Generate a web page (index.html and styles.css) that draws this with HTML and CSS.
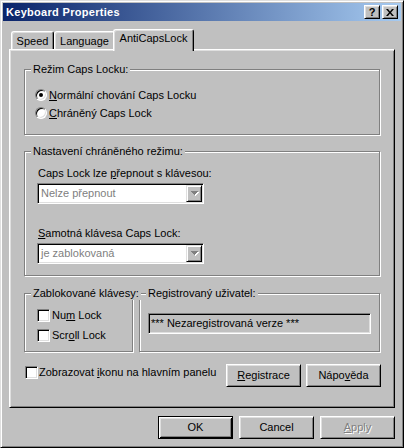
FILE: index.html
```html
<!DOCTYPE html>
<html>
<head>
<meta charset="utf-8">
<title>Keyboard Properties</title>
<link rel="stylesheet" href="styles.css">
</head>
<body>
<div class="window">
  <div class="titlebar">
    <span class="title">Keyboard Properties</span>
    <div class="tbtns">
      <span class="tbtn">?</span>
      <span class="tbtn"><svg width="8" height="7" viewBox="0 0 8 7"><path d="M0 0h2l2 2.4 2-2.4h2l-3 3.5 3 3.5h-2l-2-2.4-2 2.4h-2l3-3.5z" fill="#000"/></svg></span>
    </div>
  </div>
  <div class="body">
    <div class="tabs">
      <div class="tab t-speed">Speed</div>
      <div class="tab t-lang">Language</div>
      <div class="tab sel">AntiCapsLock</div>
    </div>
    <div class="panel">
      <div class="group g1">
        <div class="legend">Režim Caps Locku:</div>
        <div class="opt first"><span class="radio on"></span><span><u>N</u>ormální chování Caps Locku</span></div>
        <div class="opt"><span class="radio"></span><span><u>C</u>hráněný Caps Lock</span></div>
      </div>
      <div class="group g2">
        <div class="legend">Nastavení chráněného režimu:</div>
        <div class="flabel l1">Caps Lock lze <u>p</u>řepnout s klávesou:</div>
        <div class="combo">
          <span class="cval">Nelze přepnout</span>
          <span class="cbtn"><svg width="8" height="5" viewBox="0 0 8 5"><path d="M1 1H8V2H7V3H6V4H5V5H4V4H3V3H2V2H1Z" fill="#fff"/><path d="M0 0H7V1H6V2H5V3H4V4H3V3H2V2H1V1H0Z" fill="#808080"/></svg></span>
        </div>
        <div class="flabel l2"><u>S</u>amotná klávesa Caps Lock:</div>
        <div class="combo">
          <span class="cval">je zablokovaná</span>
          <span class="cbtn"><svg width="8" height="5" viewBox="0 0 8 5"><path d="M1 1H8V2H7V3H6V4H5V5H4V4H3V3H2V2H1Z" fill="#fff"/><path d="M0 0H7V1H6V2H5V3H4V4H3V3H2V2H1V1H0Z" fill="#808080"/></svg></span>
        </div>
      </div>
      <div class="grow">
        <div class="group g3">
          <div class="legend">Zablokované klávesy:</div>
          <div class="opt first"><span class="check"></span><span>Nu<u>m</u> Lock</span></div>
          <div class="opt"><span class="check"></span><span>Scr<u>o</u>ll Lock</span></div>
        </div>
        <div class="group g4">
          <div class="legend">Registrovaný uživatel:</div>
          <div class="edit">*** Nezaregistrovaná verze ***</div>
        </div>
      </div>
      <div class="brow">
        <div class="opt bchk"><span class="check"></span><span>Zobrazovat <u>i</u>konu na hlavním panelu</span></div>
        <div class="btn reg"><span><u>R</u>egistrace</span></div>
        <div class="btn nap"><span>Nápo<u>v</u>ěda</span></div>
      </div>
    </div>
    <div class="dlgbtns">
      <div class="btn def"><span>OK</span></div>
      <div class="btn"><span>Cancel</span></div>
      <div class="btn dis"><span><u>A</u>pply</span></div>
    </div>
  </div>
</div>
</body>
</html>
```

FILE: styles.css
```css
* { box-sizing: border-box; }
html, body { margin: 0; padding: 0; background: #c0c0c0; }
body {
  font-family: "Liberation Sans", Arial, sans-serif;
  font-size: 11px;
  line-height: 13px;
  color: #000;
}
u { text-decoration: underline; text-underline-offset: 1px; }

.window {
  width: 404px;
  height: 448px;
  border: 1px solid;
  border-color: #dfdfdf #000 #000 #dfdfdf;
  box-shadow: inset 1px 1px #fff, inset -1px -1px #808080;
  padding: 2px;
  display: flex;
  flex-direction: column;
  background: #c0c0c0;
}

.titlebar {
  height: 18px;
  flex: none;
  display: flex;
  align-items: center;
  justify-content: space-between;
  padding: 0 3px 0 3px;
  background: linear-gradient(to right, #0a246a, #a6caf0);
  color: #fff;
  font-weight: bold;
}
.title { letter-spacing: 0.3px; padding-top: 1px; }
.tbtns { display: flex; gap: 2px; }
.tbtn {
  width: 16px;
  height: 14px;
  background: #c0c0c0;
  border: 1px solid;
  border-color: #fff #000 #000 #fff;
  box-shadow: inset 1px 1px #dfdfdf, inset -1px -1px #808080;
  display: flex;
  align-items: center;
  justify-content: center;
  color: #000;
  font-weight: bold;
  font-size: 11px;
  line-height: 12px;
}

.body {
  flex: 1;
  padding: 8px 6px 0;
  display: flex;
  flex-direction: column;
}

.tabs {
  display: flex;
  align-items: flex-end;
  height: 20px;
  padding-left: 2px;
  flex: none;
}
.tab {
  height: 18px;
  border-top: 1px solid #fff;
  border-left: 1px solid #fff;
  border-right: 1px solid #000;
  border-radius: 3px 3px 0 0;
  box-shadow: inset 1px 1px #dfdfdf, inset -1px 0 #808080;
  text-align: center;
  padding-top: 3px;
  background: #c0c0c0;
}
.t-speed { width: 43px; }
.t-lang { width: 61px; }
.tab.sel {
  width: 81px;
  height: 22px;
  margin: 0 0 -2px -2px;
  padding-top: 2px;
  position: relative;
  z-index: 2;
}

.panel {
  height: 359px;
  flex: none;
  border: 1px solid;
  border-color: #fff #000 #000 #fff;
  box-shadow: inset 1px 1px #dfdfdf, inset -1px -1px #808080;
  padding: 19px 14px 0;
}

.group {
  border: 1px solid #808080;
  box-shadow: inset 1px 1px #fff, 1px 1px #fff;
}
.legend {
  width: max-content;
  margin: -7px 0 0 6px;
  padding: 0 2px;
  background: #c0c0c0;
  white-space: nowrap;
  position: relative;
}

.g1 { height: 66px; }
.g2 { height: 125px; margin-top: 16px; }

.opt { display: flex; align-items: center; height: 18px; white-space: nowrap; }
.g1 .opt { padding-left: 10px; }
.g1 .opt.first { margin-top: 10px; }

.radio {
  width: 12px;
  height: 12px;
  flex: none;
  border-radius: 50%;
  background: #fff;
  border: 1px solid;
  border-color: #808080 #fff #fff #808080;
  box-shadow: inset 1px 1px #000, inset -1px -1px #dfdfdf;
  margin-right: 2px;
}
.radio.on::after {
  content: "";
  display: block;
  width: 4px;
  height: 4px;
  border-radius: 50%;
  background: #000;
  margin: 3px;
}

.check {
  width: 13px;
  height: 13px;
  flex: none;
  background: #fff;
  border: 1px solid;
  border-color: #808080 #fff #fff #808080;
  box-shadow: inset 1px 1px #000, inset -1px -1px #dfdfdf;
  margin-right: 2px;
}

.flabel { padding-left: 13px; }
.l1 { margin-top: 9px; }
.l2 { margin-top: 23px; }

.combo {
  width: 167px;
  height: 21px;
  margin: 3px 0 0 12px;
  background: #fff;
  border: 1px solid;
  border-color: #808080 #fff #fff #808080;
  box-shadow: inset 1px 1px #000, inset -1px -1px #dfdfdf;
  padding: 1px;
  display: flex;
  align-items: center;
  justify-content: space-between;
}
.cval { color: #808080; padding-left: 2px; }
.cbtn {
  width: 16px;
  height: 17px;
  border: 1px solid;
  border-color: #dfdfdf #000 #000 #dfdfdf;
  box-shadow: inset 1px 1px #fff, inset -1px -1px #808080;
  background: #c0c0c0;
  display: flex;
  align-items: center;
  justify-content: center;
}
.cbtn svg { display: block; margin-left: 1px; }

.grow { display: flex; gap: 6px; margin-top: 17px; }
.g3 { width: 109px; height: 59px; flex: none; }
.g4 { flex: 1; height: 59px; }
.g3 .opt { height: 20px; padding-left: 12px; }
.g3 .opt.first { margin-top: 5px; }

.edit {
  margin: 13px 8px 0;
  height: 21px;
  border: 1px solid;
  border-color: #808080 #fff #fff #808080;
  box-shadow: inset 1px 1px #000, inset -1px -1px #dfdfdf;
  padding: 0 2px;
  display: flex;
  align-items: center;
  white-space: nowrap;
}

.brow {
  display: flex;
  align-items: flex-start;
  margin-top: 12px;
  padding-left: 1px;
}
.brow .opt { flex: 1; height: 13px; margin-top: 2px; }
.brow .check { margin-right: 1px; }

.btn {
  height: 23px;
  border: 1px solid;
  border-color: #fff #000 #000 #fff;
  box-shadow: inset 1px 1px #dfdfdf, inset -1px -1px #808080;
  display: flex;
  align-items: center;
  justify-content: center;
  white-space: nowrap;
}
.reg { width: 75px; }
.nap { width: 75px; margin-left: 5px; margin-right: -1px; }

.dlgbtns {
  display: flex;
  justify-content: flex-end;
  gap: 6px;
  margin-top: 8px;
}
.dlgbtns .btn { width: 75px; }
.btn.def {
  border-color: #000;
  box-shadow: inset 1px 1px #fff, inset -1px -1px #000, inset 2px 2px #dfdfdf, inset -2px -2px #808080;
}
.btn.dis { color: #808080; text-shadow: 1px 1px #fff; }
```
